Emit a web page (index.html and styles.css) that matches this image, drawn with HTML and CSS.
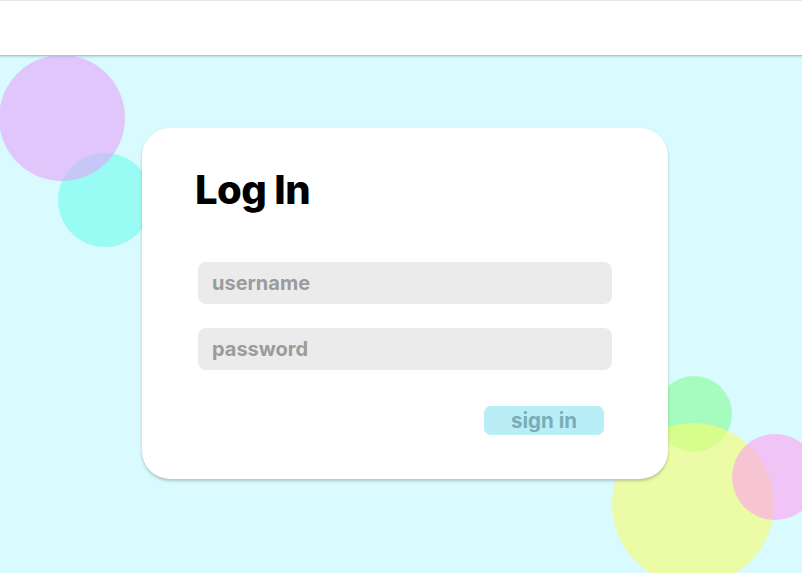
FILE: index.html
```html
<!DOCTYPE html>
<html lang="en">
<head>
<meta charset="utf-8">
<title>Log In</title>
<link rel="stylesheet" href="styles.css">
</head>
<body>
<header class="topbar"></header>
<main class="stage">
  <div class="bubbles" aria-hidden="true">
    <span class="bubble b-cyan"></span>
    <span class="bubble b-purple"></span>
    <span class="bubble b-green"></span>
    <span class="bubble b-yellow"></span>
    <span class="bubble b-pink"></span>
  </div>
  <section class="card">
    <h1 class="title">Log In</h1>
    <form class="form">
      <input class="field" type="text" placeholder="username">
      <input class="field" type="password" placeholder="password">
      <div class="actions">
        <button class="btn" type="button">sign in</button>
      </div>
    </form>
  </section>
</main>
</body>
</html>
```

FILE: styles.css
```css
* { box-sizing: border-box; }
html, body {
  margin: 0;
  height: 100%;
}
body {
  font-family: Inter, "Noto Sans", "Liberation Sans", sans-serif;
  background: #d9fafe;
  overflow: hidden;
}
.topbar {
  position: relative;
  z-index: 2;
  height: 56px;
  background: #fff;
  border-top: 1px solid #e6e8e8;
  border-bottom: 1px solid #b4c6ca;
  box-shadow: 0 1px 2px rgba(120, 150, 160, 0.35);
}
.stage {
  position: relative;
  height: calc(100% - 56px);
  padding-top: 72px;
}
.bubbles {
  position: absolute;
  inset: 0;
  top: -56px;
  overflow: hidden;
  z-index: 0;
}
.bubble {
  position: absolute;
  border-radius: 50%;
}
.b-purple { left: -1px; top: 55px; width: 126px; height: 126px; background: rgba(229, 163, 249, 0.6); }
.b-cyan { left: 58px; top: 153px; width: 94px; height: 94px; background: rgba(109, 253, 236, 0.6); }
.b-green { left: 656px; top: 376px; width: 76px; height: 76px; background: rgba(132, 253, 146, 0.6); }
.b-yellow { left: 612px; top: 423px; width: 162px; height: 162px; background: rgba(249, 253, 107, 0.6); }
.b-pink { left: 732px; top: 434px; width: 86px; height: 86px; background: rgba(255, 160, 238, 0.6); }
.card {
  position: relative;
  z-index: 1;
  width: 526px;
  margin-left: 142px;
  background: #fff;
  border-radius: 28px;
  padding: 38px 56px 44px;
  box-shadow: 0 2px 3px rgba(90, 100, 100, 0.35);
}
.title {
  margin: 0;
  font-size: 40px;
  line-height: 48px;
  font-weight: 800;
  color: #000;
  letter-spacing: -0.6px;
  margin-left: -3px;
}
.form {
  display: flex;
  flex-direction: column;
  gap: 24px;
  margin-top: 48px;
}
.field {
  display: block;
  width: 100%;
  height: 42px;
  border: none;
  border-radius: 8px;
  background: #ebebeb;
  padding: 0 14px;
  font-family: inherit;
  font-size: 20px;
  font-weight: 700;
  color: #555;
  outline: none;
}
.field::placeholder { color: #9b9b9b; opacity: 1; }
.actions {
  display: flex;
  justify-content: flex-end;
  padding-right: 8px;
  margin-top: 12px;
}
.btn {
  width: 120px;
  height: 29px;
  border: none;
  border-radius: 7px;
  background: #b9eef6;
  color: #78adb9;
  font-family: inherit;
  font-size: 20.5px;
  font-weight: 700;
  padding: 0;
  line-height: 29px;
}
```
